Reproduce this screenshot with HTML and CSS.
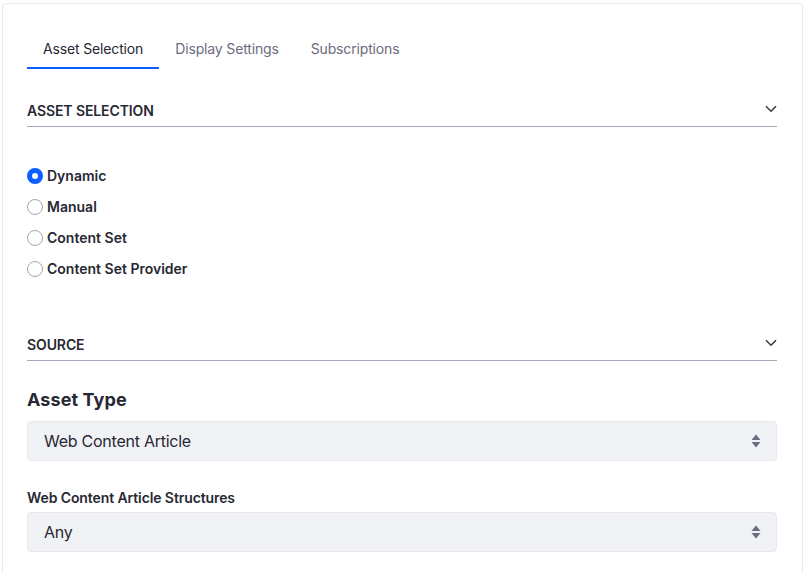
FILE: index.html
```html
<!DOCTYPE html>
<html lang="en">
<head>
<meta charset="utf-8">
<title>Asset Publisher Configuration</title>
<link rel="stylesheet" href="styles.css">
</head>
<body>
<div class="card">
  <nav class="tabs">
    <a class="tab active">Asset Selection</a>
    <a class="tab">Display Settings</a>
    <a class="tab">Subscriptions</a>
  </nav>

  <div class="panel-header first">
    <span class="panel-title">ASSET SELECTION</span>
    <svg class="chevron" width="12" height="8" viewBox="0 0 12 8"><polyline points="1,1.2 6,6.2 11,1.2" fill="none" stroke="#3a3b48" stroke-width="1.6"/></svg>
  </div>

  <div class="radios">
    <label class="radio"><span class="dot checked"></span><span>Dynamic</span></label>
    <label class="radio"><span class="dot"></span><span>Manual</span></label>
    <label class="radio"><span class="dot"></span><span>Content Set</span></label>
    <label class="radio"><span class="dot"></span><span>Content Set Provider</span></label>
  </div>

  <div class="panel-header second">
    <span class="panel-title">SOURCE</span>
    <svg class="chevron" width="12" height="8" viewBox="0 0 12 8"><polyline points="1,1.2 6,6.2 11,1.2" fill="none" stroke="#3a3b48" stroke-width="1.6"/></svg>
  </div>

  <h3 class="heading">Asset Type</h3>
  <div class="select">
    <span>Web Content Article</span>
    <svg class="caret" width="10" height="14" viewBox="0 0 10 14"><polygon points="5,0.5 9.5,6 0.5,6" fill="#6b6c7e"/><polygon points="0.5,8 9.5,8 5,13.5" fill="#6b6c7e"/></svg>
  </div>

  <div class="field-label">Web Content Article Structures</div>
  <div class="select">
    <span>Any</span>
    <svg class="caret" width="10" height="14" viewBox="0 0 10 14"><polygon points="5,0.5 9.5,6 0.5,6" fill="#6b6c7e"/><polygon points="0.5,8 9.5,8 5,13.5" fill="#6b6c7e"/></svg>
  </div>
</div>
</body>
</html>
```

FILE: styles.css
```css
html, body {
  margin: 0;
  padding: 0;
  background: #ffffff;
}

body {
  font-family: Inter, "Noto Sans", "Liberation Sans", sans-serif;
  color: #272833;
  overflow: hidden;
}

.card {
  margin: 3px 2px 0 2px;
  border: 1px solid #e7e7ed;
  border-radius: 4px;
  padding: 25px 25px 40px 24px;
  height: 640px;
}

.tabs {
  display: flex;
}

.tab {
  display: block;
  font-size: 14px;
  line-height: 20px;
  letter-spacing: -0.15px;
  padding: 10px 16px 8px 16px;
  color: #6b6c7e;
  border-bottom: 2px solid transparent;
  cursor: pointer;
}

.tab.active {
  color: #272833;
  border-bottom-color: #0b5fff;
}

.panel-header {
  display: flex;
  justify-content: space-between;
  align-items: center;
  border-bottom: 1px solid #a7a9bc;
  padding-top: 2px;
  padding-bottom: 5px;
}

.panel-header.first {
  margin-top: 30px;
}

.panel-header.second {
  margin-top: 53px;
}

.panel-title {
  font-size: 14px;
  line-height: 20px;
  font-weight: 600;
  letter-spacing: -0.1px;
}

.chevron {
  display: block;
  margin-top: -4px;
}

.radios {
  display: flex;
  flex-direction: column;
  gap: 7px;
  padding-top: 36px;
}

.radio {
  display: flex;
  align-items: center;
  gap: 4px;
  height: 24px;
  font-size: 14px;
  font-weight: 600;
}

.dot {
  box-sizing: border-box;
  width: 16px;
  height: 16px;
  border-radius: 50%;
  border: 1px solid #a5a5ad;
  background: #ffffff;
  margin-top: 1px;
}

.dot.checked {
  border: 5px solid #0b5fff;
  background: #ffffff;
}

.heading {
  margin: 27px 0 9px 0;
  font-size: 18px;
  line-height: 24px;
  font-weight: 700;
  letter-spacing: 0.1px;
}

.select {
  display: flex;
  align-items: center;
  justify-content: space-between;
  height: 40px;
  box-sizing: border-box;
  padding: 0 15px 0 16px;
  background: #f1f2f5;
  border: 1px solid #e7e7ed;
  border-radius: 4px;
  font-size: 16px;
  letter-spacing: -0.25px;
}

.caret {
  display: block;
}

.field-label {
  margin-top: 27px;
  margin-bottom: 4px;
  font-size: 14px;
  line-height: 20px;
  font-weight: 600;
  letter-spacing: -0.1px;
}
```
